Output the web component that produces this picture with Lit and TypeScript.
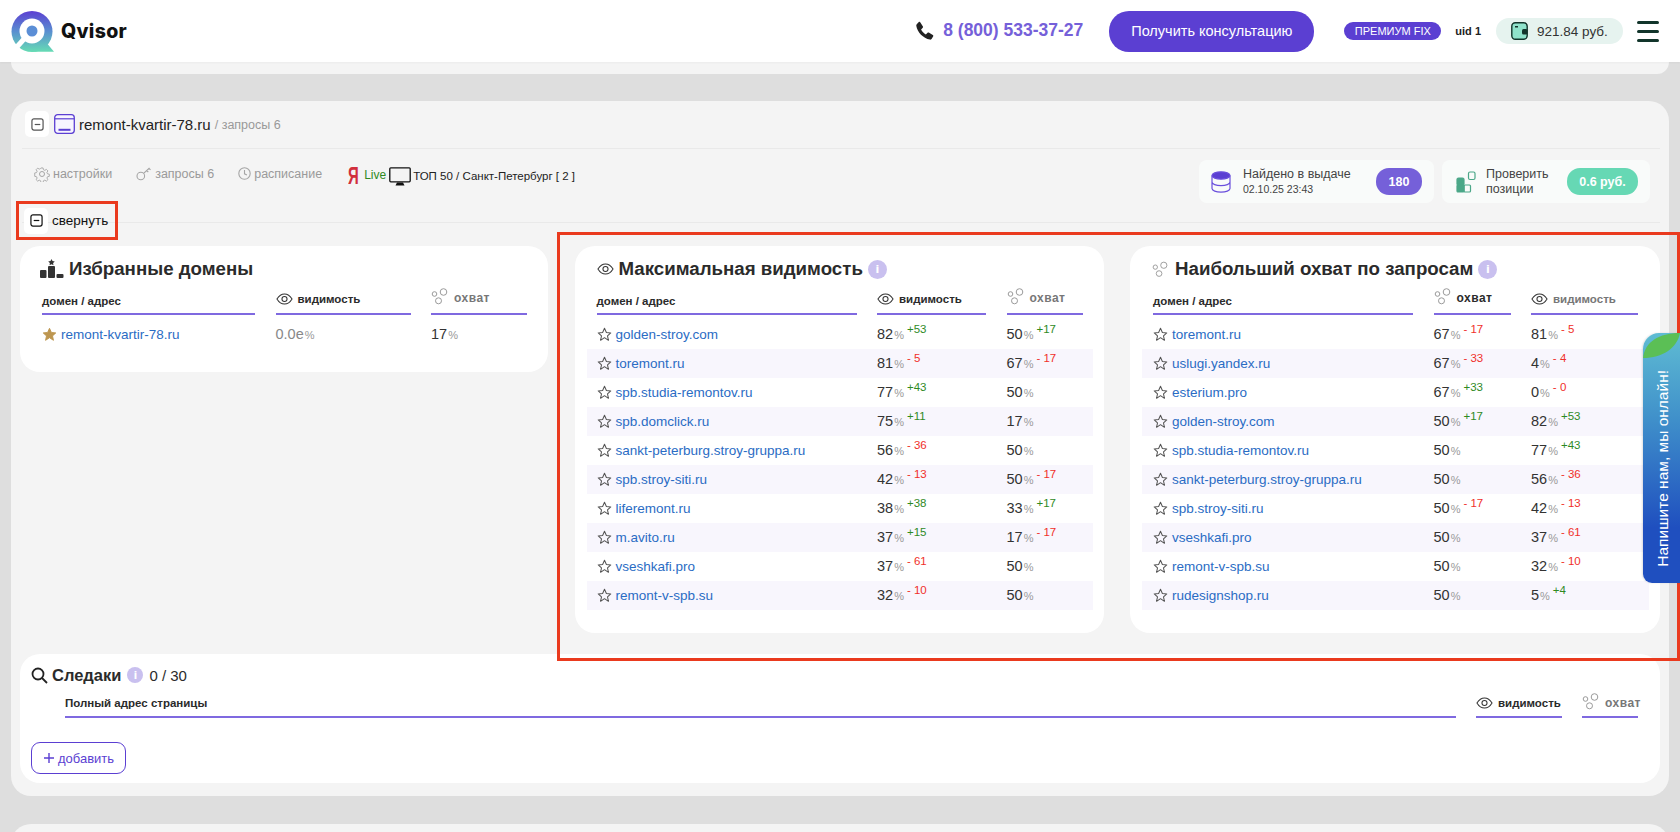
import { LitElement, html, css } from "lit";
import { customElement } from "lit/decorators.js";

type Row = { d: string; a: [string, string]; b: [string, string] };

const eye = () => html`<svg class="ic-eye" viewBox="0 0 18 14" fill="none" stroke="#333" stroke-width="1.1"><path d="M1 7c2.2-3.6 5-5.4 8-5.4S14.800 3.400 17 7c-2.200 3.600-5 5.400-8 5.400S3.200 10.600 1 7z"/><circle cx="9" cy="7" r="2.700"/></svg>`;
const bubbles = () => html`<svg class="ic-bub" viewBox="0 0 18 17" fill="none" stroke="#9a9a9a" stroke-width="1"><circle cx="3.500" cy="6" r="2.300"/><circle cx="12.500" cy="4" r="3.300"/><circle cx="7.500" cy="12.800" r="3"/></svg>`;
const star = () => html`<svg class="star" viewBox="0 0 16 16" fill="none" stroke="#555" stroke-width="1.100" stroke-linejoin="round"><path d="M8 1.400l2 4.400 4.700.5-3.500 3.200 1 4.700L8 11.400l-4.200 2.800 1-4.700L1.300 6.300 6 5.800z"/></svg>`;
const starFull = () => html`<svg class="star" viewBox="0 0 16 16" fill="#bd9650" stroke="#bd9650" stroke-width="1" stroke-linejoin="round"><path d="M8 1.400l2 4.400 4.700.5-3.500 3.200 1 4.700L8 11.400l-4.200 2.800 1-4.700L1.300 6.300 6 5.800z"/></svg>`;
const info = () => html`<span class="info">i</span>`;
const minus = (dark: boolean) => html`<svg class="minus" viewBox="0 0 14 14" fill="none" stroke=${dark ? "#111" : "#555"} stroke-width="1.300"><rect x="1" y="1" width="12" height="12" rx="2.200"/><path d="M4 7h6"/></svg>`;

const maxRows: Row[] = [
  { d: "golden-stroy.com", a: ["82", "+53"], b: ["50", "+17"] },
  { d: "toremont.ru", a: ["81", "- 5"], b: ["67", "- 17"] },
  { d: "spb.studia-remontov.ru", a: ["77", "+43"], b: ["50", ""] },
  { d: "spb.domclick.ru", a: ["75", "+11"], b: ["17", ""] },
  { d: "sankt-peterburg.stroy-gruppa.ru", a: ["56", "- 36"], b: ["50", ""] },
  { d: "spb.stroy-siti.ru", a: ["42", "- 13"], b: ["50", "- 17"] },
  { d: "liferemont.ru", a: ["38", "+38"], b: ["33", "+17"] },
  { d: "m.avito.ru", a: ["37", "+15"], b: ["17", "- 17"] },
  { d: "vseshkafi.pro", a: ["37", "- 61"], b: ["50", ""] },
  { d: "remont-v-spb.su", a: ["32", "- 10"], b: ["50", ""] },
];
const reachRows: Row[] = [
  { d: "toremont.ru", a: ["67", "- 17"], b: ["81", "- 5"] },
  { d: "uslugi.yandex.ru", a: ["67", "- 33"], b: ["4", "- 4"] },
  { d: "esterium.pro", a: ["67", "+33"], b: ["0", "- 0"] },
  { d: "golden-stroy.com", a: ["50", "+17"], b: ["82", "+53"] },
  { d: "spb.studia-remontov.ru", a: ["50", ""], b: ["77", "+43"] },
  { d: "sankt-peterburg.stroy-gruppa.ru", a: ["50", ""], b: ["56", "- 36"] },
  { d: "spb.stroy-siti.ru", a: ["50", "- 17"], b: ["42", "- 13"] },
  { d: "vseshkafi.pro", a: ["50", ""], b: ["37", "- 61"] },
  { d: "remont-v-spb.su", a: ["50", ""], b: ["32", "- 10"] },
  { d: "rudesignshop.ru", a: ["50", ""], b: ["5", "+4"] },
];

@customElement("app-root")
export class AppRoot extends LitElement {
  static styles = css`
    :host { display: block; width: 1680px; height: 832px; overflow: hidden; position: relative; background: #dedede; font-family: "Liberation Sans", Arial, sans-serif; color: #333; }
    * { box-sizing: border-box; }
    svg { display: block; flex: none; }
    header { height: 62px; background: #fff; display: flex; align-items: center; padding: 0 21px 0 11px; box-shadow: 0 1px 2px rgba(0,0,0,.04); position: relative; z-index: 2; }
    .logo { display: flex; align-items: center; gap: 7px; }
    .logo-text { font-family: Inter, sans-serif; font-weight: 800; font-size: 19.500px; color: #111; letter-spacing: .3px; }
    .head-right { margin-left: auto; display: flex; align-items: center; }
    .phone { display: flex; align-items: center; gap: 9px; font-size: 17.500px; font-weight: 700; color: #7560d9; margin-right: 26px; margin-top: -1px; }
    .cta { width: 205px; height: 41px; border-radius: 20px; background: #5b3fd2; color: #fff; font-size: 14.500px; display: flex; align-items: center; justify-content: center; margin-right: 30px; }
    .plan { width: 97px; height: 18px; border-radius: 9px; background: #5b3fd2; color: #fff; font-size: 11px; display: flex; align-items: center; justify-content: center; margin-right: 14px; }
    .uid { font-size: 11px; font-weight: 700; color: #222; margin-right: 15px; }
    .wallet { width: 127px; height: 26px; border-radius: 13px; background: #e6f3ef; display: flex; align-items: center; gap: 9px; padding-left: 15px; font-size: 13.500px; color: #333; margin-right: 14px; }
    .burger { display: flex; flex-direction: column; gap: 6px; width: 22px; }
    .burger i { display: block; height: 3px; border-radius: 2px; background: #12352b; }

    .stub { margin: 0 11px; height: 12px; background: #f4f4f4; border-radius: 0 0 16px 16px; }
    .main { margin: 27px 11px 0; height: 695px; background: #f4f4f4; border-radius: 20px; padding: 10px 9px 0; }
    .next { margin: 28px 11px 0; height: 40px; background: #f4f4f4; border-radius: 20px; }

    .site { display: flex; align-items: center; height: 26px; margin-left: 5px; }
    .sq { width: 24px; height: 26px; background: #fff; border-radius: 5px; display: flex; align-items: center; justify-content: center; }
    .minus { width: 13px; height: 13px; }
    .win { width: 21px; height: 20px; margin: 0 4px 0 5px; }
    .site b { font-weight: 400; font-size: 15px; color: #222; }
    .site small { font-size: 12.500px; color: #999; margin-left: 4px; margin-top: 2px; }
    .rule { height: 1px; background: #e9e9e9; margin-left: 2px; }
    .r1 { margin-top: 11px; }

    .tools { display: flex; align-items: flex-start; height: 43px; padding-left: 14px; margin-top: 11px; margin-right: 10px; }
    .tags { display: flex; align-items: center; height: 32px; }
    .tab { display: flex; align-items: center; gap: 3px; font-size: 12.500px; color: #9a9a9a; margin-top: -5px; }
    .t1 { margin-right: 24px; } .t2 { margin-right: 24px; } .t3 { margin-right: 26px; }
    .ya { font-size: 23px; font-weight: 700; color: #d12f3c; line-height: 1; width: 13px; transform: scaleX(.65); transform-origin: left center; margin-right: 3px; }
    .live { font-size: 12px; color: #2f8a1f; margin-right: 3px; margin-top: -3px; }
    .top { font-size: 11.500px; color: #222; margin-left: 2px; }
    .mon { width: 22px; height: 19px; }
    .stats { margin-left: auto; display: flex; gap: 8px; }
    .stat { height: 43px; background: #f9fbfa; border-radius: 8px; display: flex; align-items: center; font-size: 12.500px; color: #444; }
    .s1 { width: 235px; padding: 0 12px; }
    .s2 { width: 208px; padding: 0 12px 0 14px; }
    .stat svg { margin-right: 12px; }
    .s2 svg { margin-right: 10px; }
    .stat-t { line-height: 15px; flex: 1; }
    .stat-t small { font-size: 10.500px; color: #444; display: block; }
    .pill { height: 27px; border-radius: 13px; color: #fff; font-size: 12.500px; font-weight: 700; display: flex; align-items: center; justify-content: center; }
    .p1 { width: 46px; background: #7560d9; }
    .p2 { width: 71px; background: #66d8b4; }

    .fold { display: flex; align-items: center; height: 27px; margin-top: 4px; margin-left: 4px; font-size: 13.500px; color: #111; }
    .fold span { margin-left: 4px; }
    .r2 { margin-top: -12px; }

    .cards { display: grid; grid-template-columns: repeat(3, 1fr); gap: 26.500px; margin-top: 23px; align-items: start; }
    .card { background: #fff; border-radius: 20px; padding: 11px 11px 23px 12px; }
    .title { display: flex; align-items: center; height: 24px; font-size: 18.700px; font-weight: 700; color: #2b2b2b; padding-left: 10px; }
    .title svg.ic-eye { width: 17px; height: 14px; margin-right: 5px; }
    .title svg.ic-bub { width: 17px; height: 17px; margin-right: 6px; }
    .podium { width: 24px; height: 20px; margin-right: 5px; margin-left: -2px; }
    .info { width: 19px; height: 19px; border-radius: 50%; background: #c9c0ef; color: #fff; font-size: 11px; font-weight: 700; display: inline-flex; align-items: center; justify-content: center; font-family: "DejaVu Sans", sans-serif; margin-left: 5px; }
    .grid { display: grid; align-items: center; padding: 0 10px; column-gap: 20.500px; }
    .cols-fav { grid-template-columns: 213px 135px 96px; }
    .cols-max { grid-template-columns: 260px 109px 76px; }
    .cols-reach { grid-template-columns: 260px 77px 107px; padding: 0 11px; }
    .heads { height: 31px; margin-top: 3px; }
    .th { height: 31px; border-bottom: 2px solid #7f69e0; font-size: 11.500px; font-weight: 700; color: #2b2b2b; display: flex; align-items: center; gap: 5px; }
    .th svg.ic-eye { width: 17px; height: 14px; flex: none; }
    .th svg.ic-bub { width: 18px; height: 17px; margin-top: -3px; }
    .th.off { color: #777; }
    .th.up { padding-bottom: 1px; font-size: 12px; letter-spacing: .5px; }
    .th.lead { padding-top: 4px; }
    .rows { margin-top: 5px; }
    .row { height: 29px; }
    .row:nth-child(even) { background: #f8f6fd; }
    .dom { display: flex; align-items: center; font-size: 13.500px; color: #2a6cc4; gap: 4px; white-space: nowrap; }
    .star { width: 15px; height: 15px; }
    .val { font-size: 14.500px; line-height: 16px; color: #333; white-space: nowrap; }
    .val small { font-size: 11px; color: #999; margin-left: 1px; }
    .val.mute { color: #888; }
    .delta { font-size: 11.500px; line-height: 0; margin-left: 3px; vertical-align: 6.500px; }
    .up-d { color: #2f8a1f; } .dn-d { color: #f0302a; }

    .trace { background: #fff; border-radius: 20px; margin-top: 21px; height: 129px; padding: 9px 22px 0 11px; }
    .trace-h { display: flex; align-items: center; height: 24px; font-size: 16.500px; font-weight: 700; color: #2b2b2b; }
    .trace-h svg { width: 17px; height: 17px; margin-right: 4px; }
    .trace-h .info { width: 16px; height: 16px; margin: 0 6px; font-size: 10px; }
    .trace-h span.n { font-weight: 400; font-size: 15px; }
    .trace-grid { display: grid; grid-template-columns: 1391px 86px 56px; column-gap: 20px; margin-left: 34px; margin-top: 3px; }
    .trace-grid .th { height: 28px; }
    .add { width: 95px; height: 32px; margin-top: 24px; border: 1px solid #5b3fd2; border-radius: 9px; color: #5b3fd2; font-size: 13px; display: flex; align-items: center; justify-content: center; gap: 3px; }
    .add svg { width: 12px; height: 12px; }

    .mark { position: absolute; border: 3px solid #ea3a1e; pointer-events: none; z-index: 3; }
    .m1 { left: 16px; top: 201px; width: 102px; height: 39px; }
    .m2 { left: 557px; top: 232px; width: 1123px; height: 429px; }
    .chat { position: absolute; left: 1643px; top: 333px; width: 37px; height: 250px; padding-left: 3px; border-radius: 16px 0 0 9px; background: linear-gradient(180deg, #5fbcd3 0%, #3f8fca 35%, #1f4fbf 78%, #1f4fbf 100%); z-index: 4; overflow: hidden; display: flex; align-items: center; justify-content: center; box-shadow: -1px 0 2px rgba(0,0,0,.12); }
    .chat span { writing-mode: vertical-rl; transform: rotate(180deg); color: #fff; font-size: 15.500px; white-space: nowrap; margin-top: 20px; }
    .leaf { position: absolute; left: 0; top: 0; width: 37px; height: 25px; }
  `;

  private val(v: [string, string]) {
    return html`<div class="val">${v[0]}<small>%</small>${v[1]
      ? html`<span class="delta ${v[1][0] === "+" ? "up-d" : "dn-d"}">${v[1]}</span>`
      : ""}</div>`;
  }

  private table(rows: Row[], cls: string) {
    return html`<div class="rows">
      ${rows.map(
        (r) => html`<div class="grid row ${cls}">
          <div class="dom">${star()}${r.d}</div>
          ${this.val(r.a)} ${this.val(r.b)}
        </div>`
      )}
    </div>`;
  }

  render() {
    return html`
      <header>
        <div class="logo">
          <svg width="43" height="41" viewBox="0 0 43 41">
            <defs><linearGradient id="lg" gradientUnits="userSpaceOnUse" x1="0" y1="0" x2="0" y2="41"><stop offset="0" stop-color="#5b3fd2"/><stop offset=".5" stop-color="#5a8fd0"/><stop offset="1" stop-color="#66dcb4"/></linearGradient></defs>
            <circle cx="21" cy="20.500" r="20.500" fill="url(#lg)"/>
            <path fill="url(#lg)" d="M34 30l9 10.800H20z"/>
            <circle cx="21" cy="20" r="12.500" fill="#fff"/>
            <path d="M13 28L4.500 37.500" stroke="#fff" stroke-width="5"/>
            <circle cx="21" cy="20" r="5.500" fill="#5b8ed6"/>
          </svg>
          <span class="logo-text">Qvisor</span>
        </div>
        <div class="head-right">
          <div class="phone">
            <svg width="19" height="19" viewBox="0 0 24 24" fill="#222"><path d="M6.600 1.500l3.400 5.600c.3.500.2 1.100-.2 1.500L7.700 10.700c1.300 2.700 3.400 4.900 6 6.200l2.200-2.100c.4-.4 1-.5 1.500-.2l5.100 3.200c.6.400.8 1.100.4 1.700l-2 3.100c-.5.700-1.300 1.100-2.100.9C10.300 21.800 3 14.300 1.600 6c-.1-.9.200-1.700.9-2.200l2.600-2.700c.5-.4 1.100-.2 1.500.4z"/></svg>
            8 (800) 533-37-27
          </div>
          <div class="cta">Получить консультацию</div>
          <div class="plan">ПРЕМИУМ FIX</div>
          <div class="uid">uid 1</div>
          <div class="wallet">
            <svg width="17" height="18" viewBox="0 0 17 18"><rect x=".8" y=".8" width="15.400" height="16.400" rx="3.500" fill="#8fe3cb" stroke="#12352b" stroke-width="1.400"/><rect x="11" y="7" width="5.500" height="5.500" rx="1.500" fill="#12352b"/><rect x="4" y="4" width="3" height="1.500" fill="#12352b"/></svg>
            921.84 руб.
          </div>
          <div class="burger"><i></i><i></i><i></i></div>
        </div>
      </header>

      <div class="stub"></div>
      <section class="main">
        <div class="site">
          <div class="sq">${minus(false)}</div>
          <svg class="win" viewBox="0 0 21 20" fill="none" stroke="#5b3fd2"><rect x=".7" y=".7" width="19.600" height="18.600" rx="3" stroke-width="1.300" fill="#f7f5ff"/><path d="M1 4.800h19" stroke-width="1.200"/><path d="M4.500 15.800h12" stroke-width="2"/></svg>
          <b>remont-kvartir-78.ru</b><small>/ запросы 6</small>
        </div>
        <div class="rule r1"></div>

        <div class="tools">
          <div class="tags">
            <div class="tab t1">
              <svg width="16" height="16" viewBox="0 0 16 16" fill="none" stroke="#a5a5a5" stroke-width="1"><circle cx="8" cy="8" r="2.500"/><path d="M6.800 1.200h2.400l.4 2 1.500.7 1.800-1.100 1.700 1.700-1.100 1.800.7 1.500 2 .4v2.400l-2 .4-.7 1.500 1.100 1.800-1.700 1.700-1.800-1.100-1.500.7-.4 2H6.800l-.4-2-1.500-.7-1.800 1.100-1.700-1.700 1.100-1.800-.7-1.500-2-.4V6.800l2-.4.700-1.500-1.100-1.800 1.700-1.700 1.800 1.100 1.500-.7z" transform="translate(.9 .9) scale(.89)"/></svg>
              настройки
            </div>
            <div class="tab t2">
              <svg width="16" height="15" viewBox="0 0 16 15" fill="none" stroke="#a5a5a5" stroke-width="1.100"><circle cx="4.800" cy="10" r="3.800"/><path d="M7.600 7.300L13.500 2M10.500 4.500l1.800 1.500M13 2.300l1.500 1.500"/></svg>
              запросы 6
            </div>
            <div class="tab t3">
              <svg width="13" height="13" viewBox="0 0 13 13" fill="none" stroke="#a5a5a5" stroke-width="1.100"><circle cx="6.500" cy="6.500" r="5.700"/><path d="M6.500 3v3.800l2.400 1.200"/></svg>
              расписание
            </div>
            <span class="ya">Я</span>
            <span class="live">Live</span>
            <svg class="mon" viewBox="0 0 22 19" fill="none"><rect x=".8" y=".8" width="20.400" height="14" rx="1" stroke="#111" stroke-width="1.300"/><path d="M8 15.500h6l1.500 3h-9z" fill="#111"/></svg>
            <span class="top">ТОП 50 / Санкт-Петербург [ 2 ]</span>
          </div>
          <div class="stats">
            <div class="stat s1">
              <svg width="20" height="22" viewBox="0 0 20 22" fill="none" stroke="#6a4fdc" stroke-width="1.200"><ellipse cx="10" cy="4.500" rx="9" ry="3.700" fill="#5b3fd2"/><path d="M1 4.500v13c0 2 4 3.700 9 3.700s9-1.700 9-3.700v-13M1 11c0 2 4 3.700 9 3.700s9-1.700 9-3.700"/></svg>
              <div class="stat-t">Найдено в выдаче<small>02.10.25 23:43</small></div>
              <div class="pill p1">180</div>
            </div>
            <div class="stat s2">
              <svg width="20" height="22" viewBox="0 0 20 22" fill="none" stroke="#4ba788" stroke-width="1.200"><rect x="12.500" y="1" width="6.500" height="7.500" rx="1.500"/><rect x="1" y="7" width="7" height="7.500" rx="1.500" fill="#4ba788"/><rect x="1" y="14" width="7" height="7" rx="1" fill="#4ba788"/><rect x="8" y="14" width="6.500" height="7" rx="1"/></svg>
              <div class="stat-t">Проверить<br />позиции</div>
              <div class="pill p2">0.6 руб.</div>
            </div>
          </div>
        </div>

        <div class="fold"><div class="sq">${minus(true)}</div><span>свернуть</span></div>
        <div class="rule r2"></div>

        <div class="cards">
          <div class="card">
            <div class="title">
              <svg class="podium" viewBox="0 0 24 20" fill="#333"><rect x="0" y="11" width="6.500" height="8" rx="1"/><rect x="8" y="7" width="7" height="12" rx="1"/><rect x="16.500" y="15" width="7" height="4" rx="1"/><path d="M11.500 0l1 2.100 2.300.3-1.700 1.600.4 2.300-2-1.100-2 1.100.4-2.300L8.200 2.400l2.300-.3z"/></svg>
              Избранные домены
            </div>
            <div class="grid heads cols-fav">
              <div class="th lead">домен / адрес</div>
              <div class="th">${eye()}видимость</div>
              <div class="th off up">${bubbles()}охват</div>
            </div>
            <div class="rows">
              <div class="grid row cols-fav">
                <div class="dom">${starFull()}remont-kvartir-78.ru</div>
                <div class="val mute">0.0e<small>%</small></div>
                <div class="val">17<small>%</small></div>
              </div>
            </div>
          </div>

          <div class="card">
            <div class="title">${eye()}Максимальная видимость${info()}</div>
            <div class="grid heads cols-max">
              <div class="th lead">домен / адрес</div>
              <div class="th">${eye()}видимость</div>
              <div class="th off up">${bubbles()}охват</div>
            </div>
            ${this.table(maxRows, "cols-max")}
          </div>

          <div class="card">
            <div class="title">${bubbles()}Наибольший охват по запросам${info()}</div>
            <div class="grid heads cols-reach">
              <div class="th lead">домен / адрес</div>
              <div class="th up">${bubbles()}охват</div>
              <div class="th off">${eye()}видимость</div>
            </div>
            ${this.table(reachRows, "cols-reach")}
          </div>
        </div>

        <div class="trace">
          <div class="trace-h">
            <svg viewBox="0 0 17 17" fill="none" stroke="#222" stroke-width="1.800"><circle cx="7" cy="7" r="5.500"/><path d="M11 11l5 5"/></svg>
            Следаки${info()}<span class="n">0 / 30</span>
          </div>
          <div class="trace-grid">
            <div class="th">Полный адрес страницы</div>
            <div class="th">${eye()}видимость</div>
            <div class="th off up">${bubbles()}охват</div>
          </div>
          <div class="add">
            <svg viewBox="0 0 12 12" stroke="#5b3fd2" stroke-width="1.400"><path d="M6 1v10M1 6h10"/></svg>
            добавить
          </div>
        </div>
      </section>
      <div class="next"></div>

      <div class="mark m1"></div>
      <div class="mark m2"></div>
      <div class="chat">
        <svg class="leaf" viewBox="0 0 38 25" preserveAspectRatio="none"><path d="M0 25C2 9 16 0 38 0 35 15 20 25 0 25z" fill="#5bbf55"/></svg>
        <span>Напишите нам, мы онлайн!</span>
      </div>
    `;
  }
}
